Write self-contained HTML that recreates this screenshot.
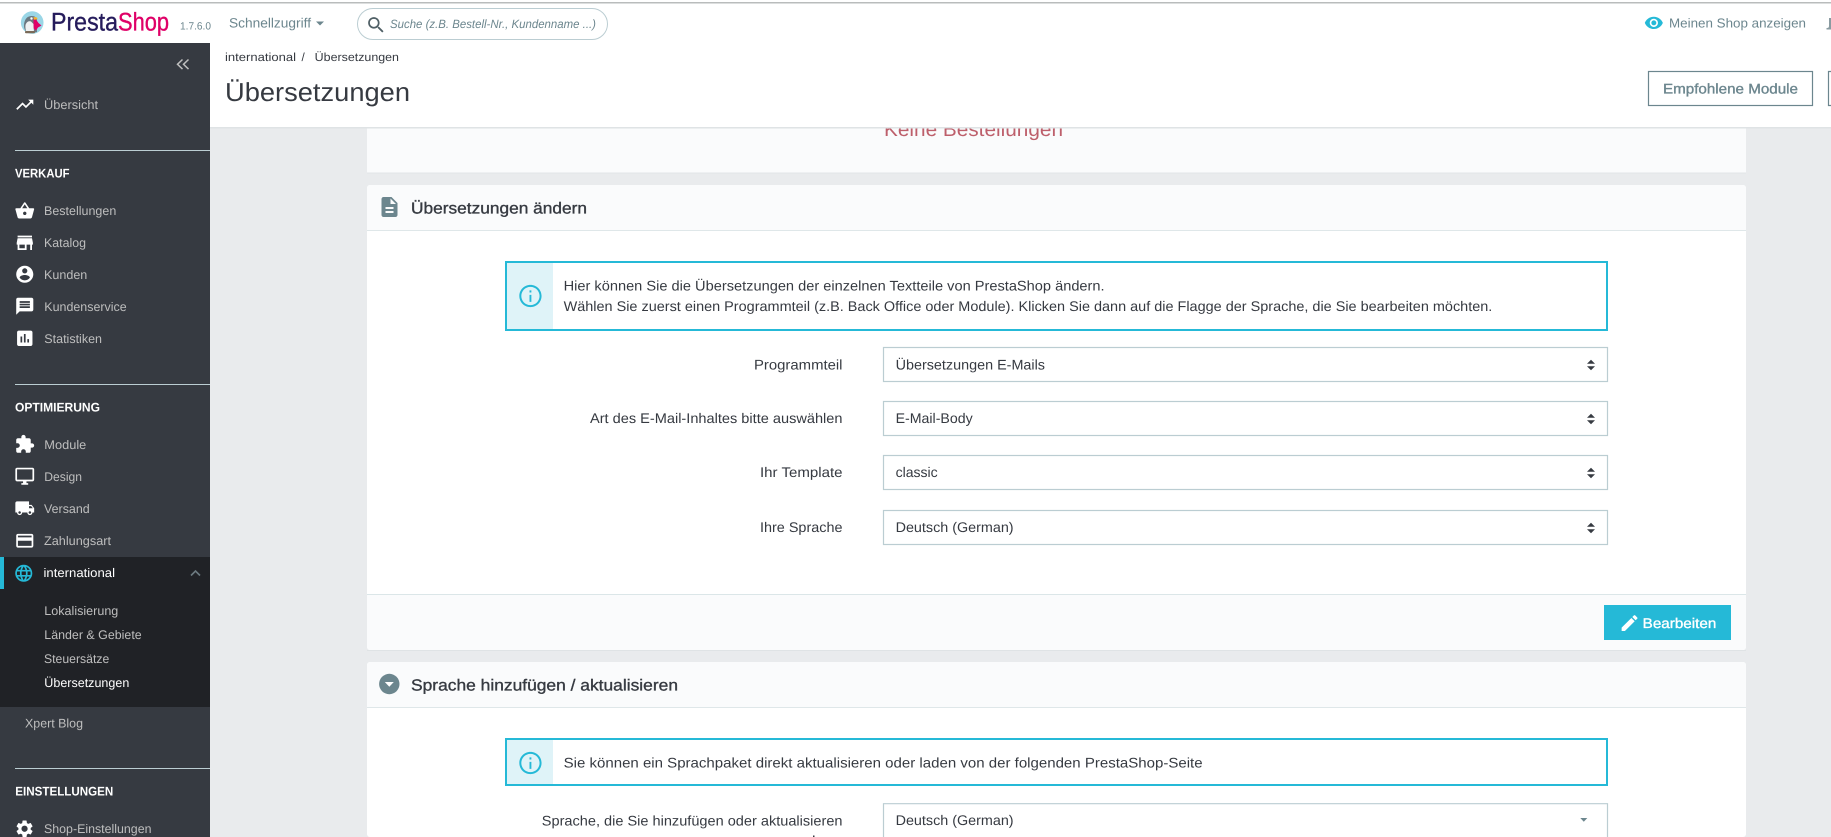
<!DOCTYPE html>
<html lang="de">
<head>
<meta charset="utf-8">
<title>Übersetzungen • PrestaShop</title>
<style>
html,body{margin:0;padding:0;width:1831px;height:837px;overflow:hidden;background:#e9ebed}
svg{display:block}
text{font-family:"Liberation Sans",sans-serif}
.nav{font-size:12.5px;fill:#bebebe}
.sec{font-size:12.5px;font-weight:700;fill:#fff}
.body{font-size:14px;fill:#363a41}
.semi{stroke-width:.35px;paint-order:stroke}
.ic{fill:#fff}
</style>
</head>
<body>
<svg xmlns="http://www.w3.org/2000/svg" width="1831" height="837" viewBox="0 0 1831 837" text-rendering="geometricPrecision">
<defs>
<g id="info"><path fill="#25b9d7" d="M11.200 7.200h1.600v1.800h-1.600zm0 3.800h1.600v6h-1.600zM12 2.500C6.750 2.500 2.500 6.750 2.500 12s4.250 9.500 9.500 9.500 9.500-4.250 9.500-9.500S17.250 2.500 12 2.500zm0 17.300c-4.300 0-7.800-3.500-7.800-7.800S7.700 4.200 12 4.200s7.800 3.500 7.800 7.800-3.500 7.800-7.800 7.800z"/></g>
<g id="ud"><path fill="#363a41" d="M-4 -1 L0 -5 L4 -1 Z M-4 1.500 L0 5.500 L4 1.500 Z"/></g>
</defs>

<!-- page background -->
<rect width="1831" height="837" fill="#e9ebed"/>

<!-- card 1 remnant -->
<rect x="367" y="120" width="1379" height="53" fill="#fafbfc"/>
<rect x="367" y="172.500" width="1379" height="1" fill="#e1e6e8"/>
<text x="884" y="136" font-size="20" fill="#bd5f6b" textLength="179" lengthAdjust="spacingAndGlyphs">Keine Bestellungen</text>

<!-- header -->
<rect x="0" y="0" width="1831" height="127.500" fill="#fff"/>
<rect x="210" y="127" width="1621" height="1.500" fill="#dfe3e5"/>
<rect x="0" y="2" width="1831" height="1.500" fill="#b9bcbc"/>

<!-- logo -->
<circle cx="32.200" cy="22.600" r="11.300" fill="#9ad6e6"/>
<path d="M24 26c0-6 2.500-9.500 7-10c3.500-.4 5.500 1.500 6 3.500l-.5 3l.5 9.500c-3 .8-7 1-10.500 0c-1.500-1.500-2.500-3.500-2.500-6z" fill="#6a7880"/>
<path d="M25.500 25c1-3 3-4.300 5.500-3.500l2.500 2.500l.5 8.500c-2.500 .8-5 .8-7.500 0c-.9-2.500-1.300-5-1-7.500z" fill="#eef1f2"/>
<path d="M33.500 19l2.500 .5l2.500 3.500l3 2.500l-3.500 2l-2 3l-2.300-2l-.2-5z" fill="#df0067"/>
<path d="M33.500 17l3.500 .5l.5 1.700l-3.500 .5z" fill="#f5b42c"/>
<circle cx="31.500" cy="18.500" r="1.200" fill="#fff"/>
<rect x="25" y="31" width="10" height="2.300" rx="1" fill="#7a6a58"/>
<text class="semi" x="51" y="30.500" font-size="25.500" fill="#251b5b" stroke="#251b5b" textLength="67" lengthAdjust="spacingAndGlyphs">Presta</text>
<text class="semi" x="118" y="30.500" font-size="25.500" fill="#df0067" stroke="#df0067" textLength="51" lengthAdjust="spacingAndGlyphs">Shop</text>
<text x="180" y="29.500" font-size="10.500" fill="#6c868e" textLength="31" lengthAdjust="spacingAndGlyphs">1.7.6.0</text>

<text x="229" y="27.500" font-size="13.500" fill="#6c868e" textLength="82" lengthAdjust="spacingAndGlyphs">Schnellzugriff</text>
<path d="M316 21.500h8l-4 4z" fill="#6c868e"/>

<rect x="357.500" y="8.500" width="250" height="31" rx="15.500" fill="#fff" stroke="#bbcdd2" stroke-width="1"/>
<g transform="translate(365.500,14.500) scale(0.88)"><path fill="#4f5f65" d="M15.500 14h-.79l-.28-.27C15.410 12.590 16 11.110 16 9.500 16 5.910 13.090 3 9.500 3S3 5.910 3 9.500 5.910 16 9.500 16c1.610 0 3.090-.59 4.230-1.570l.27.28v.79l5 4.990L20.490 19l-4.990-5zm-6 0C7.010 14 5 11.990 5 9.500S7.010 5 9.500 5 14 7.010 14 9.500 11.990 14 9.500 14z"/></g>
<text x="390" y="28" font-size="12" font-style="italic" fill="#6c868e" textLength="206" lengthAdjust="spacingAndGlyphs">Suche (z.B. Bestell-Nr., Kundenname ...)</text>

<!-- header right -->
<g transform="translate(1644,13) scale(0.82)"><path fill="#25b9d7" d="M12 4.500C7 4.500 2.730 7.610 1 12c1.730 4.390 6 7.500 11 7.500s9.270-3.110 11-7.500c-1.730-4.390-6-7.500-11-7.500zM12 17c-2.760 0-5-2.240-5-5s2.240-5 5-5 5 2.240 5 5-2.240 5-5 5zm0-8c-1.660 0-3 1.340-3 3s1.340 3 3 3 3-1.340 3-3-1.340-3-3-3z"/></g>
<text x="1669" y="27.500" font-size="13" fill="#6c868e" textLength="137" lengthAdjust="spacingAndGlyphs">Meinen Shop anzeigen</text>
<path d="M1829 18v8c0 1.500-1 2-2 2h-.5v1.500h4.500V18z" fill="#8a9ba1"/>

<!-- breadcrumb + title -->
<text x="225" y="61" font-size="11.700" fill="#363a41" textLength="71" lengthAdjust="spacingAndGlyphs">international</text>
<text x="301.500" y="61" font-size="11.700" fill="#363a41">/</text>
<text x="314.700" y="61" font-size="11.700" fill="#363a41" textLength="84.300" lengthAdjust="spacingAndGlyphs">Übersetzungen</text>
<text x="225" y="101" font-size="26" fill="#363a41" textLength="185" lengthAdjust="spacingAndGlyphs">Übersetzungen</text>

<rect x="1648.500" y="71.500" width="164" height="34" fill="#fff" stroke="#6c868e" stroke-width="1.200"/>
<text class="semi" x="1663" y="93.500" font-size="14" fill="#6c868e" stroke="#6c868e" textLength="135" lengthAdjust="spacingAndGlyphs">Empfohlene Module</text>
<path d="M1831 71.500h-2.500v34h2.500" fill="#fff" stroke="#6c868e" stroke-width="1.200"/>

<!-- sidebar -->
<rect x="0" y="43" width="210" height="794" fill="#363a41"/>
<path d="M182.500 59.500l-5 4.800l5 4.800 M188.500 59.500l-5 4.800l5 4.800" fill="none" stroke="#bebebe" stroke-width="1.500"/>

<g transform="translate(14.500,94.500) scale(0.855)"><path class="ic" d="M16 6l2.290 2.290-4.880 4.880-4-4L2 16.590 3.410 18l6-6 4 4 6.300-6.290L22 12V6z"/></g>
<text class="nav" x="44" y="109" textLength="54" lengthAdjust="spacingAndGlyphs">Übersicht</text>

<rect x="15" y="150" width="195" height="1" fill="#bbcdd2"/>
<text class="sec" x="15" y="177.500" textLength="54.500" lengthAdjust="spacingAndGlyphs">VERKAUF</text>

<g transform="translate(14.500,200.500) scale(0.855)"><path class="ic" d="M17.210 9l-4.380-6.560c-.19-.28-.51-.42-.83-.42-.32 0-.64.14-.83.43L6.790 9H2c-.55 0-1 .45-1 1 0 .09.01.18.04.27l2.540 9.270c.23.84 1 1.460 1.920 1.460h13c.92 0 1.690-.62 1.930-1.460l2.540-9.270L23 10c0-.55-.45-1-1-1h-4.790zM9 9l3-4.400L15 9H9zm3 8c-1.100 0-2-.9-2-2s.9-2 2-2 2 .9 2 2-.9 2-2 2z"/></g>
<text class="nav" x="44" y="215" textLength="72.300" lengthAdjust="spacingAndGlyphs">Bestellungen</text>

<g transform="translate(14,232) scale(0.9)"><path class="ic" d="M20 4H4v2h16V4zm1 10v-2l-1-5H4l-1 5v2h1v6h10v-6h4v6h2v-6h1zm-9 4H6v-4h6v4z"/></g>
<text class="nav" x="44" y="247" textLength="42" lengthAdjust="spacingAndGlyphs">Katalog</text>

<g transform="translate(14.500,264) scale(0.855)"><path class="ic" d="M12 2C6.480 2 2 6.480 2 12s4.480 10 10 10 10-4.480 10-10S17.520 2 12 2zm0 3c1.660 0 3 1.340 3 3s-1.340 3-3 3-3-1.340-3-3 1.340-3 3-3zm0 14.200c-2.500 0-4.710-1.280-6-3.220.03-1.990 4-3.080 6-3.080 1.990 0 5.970 1.090 6 3.080-1.290 1.940-3.500 3.220-6 3.220z"/></g>
<text class="nav" x="44" y="279" textLength="43.300" lengthAdjust="spacingAndGlyphs">Kunden</text>

<g transform="translate(14.500,296) scale(0.855)"><path class="ic" d="M20 2H4c-1.100 0-1.990.9-1.990 2L2 22l4-4h14c1.100 0 2-.9 2-2V4c0-1.100-.9-2-2-2zm-2 12H6v-2h12v2zm0-3H6V9h12v2zm0-3H6V6h12v2z"/></g>
<text class="nav" x="44.300" y="311" textLength="82.400" lengthAdjust="spacingAndGlyphs">Kundenservice</text>

<g transform="translate(14.500,328) scale(0.855)"><path class="ic" d="M19 3H5c-1.100 0-2 .9-2 2v14c0 1.100.9 2 2 2h14c1.100 0 2-.9 2-2V5c0-1.100-.9-2-2-2zM9 17H7v-7h2v7zm4 0h-2V7h2v10zm4 0h-2v-4h2v4z"/></g>
<text class="nav" x="44.300" y="343" textLength="57.700" lengthAdjust="spacingAndGlyphs">Statistiken</text>

<rect x="15" y="384" width="195" height="1" fill="#bbcdd2"/>
<text class="sec" x="15" y="411.500" textLength="85" lengthAdjust="spacingAndGlyphs">OPTIMIERUNG</text>

<g transform="translate(14.500,434) scale(0.855)"><path class="ic" d="M20.500 11H19V7c0-1.100-.9-2-2-2h-4V3.500C13 2.120 11.880 1 10.500 1S8 2.120 8 3.500V5H4c-1.100 0-1.990.9-1.990 2v3.800H3.500c1.490 0 2.700 1.210 2.700 2.700s-1.210 2.700-2.700 2.700H2V20c0 1.100.9 2 2 2h3.800v-1.500c0-1.490 1.210-2.700 2.700-2.700 1.490 0 2.700 1.210 2.700 2.700V22H17c1.100 0 2-.9 2-2v-4h1.500c1.380 0 2.500-1.120 2.500-2.500S21.880 11 20.500 11z"/></g>
<text class="nav" x="44.300" y="449" textLength="42" lengthAdjust="spacingAndGlyphs">Module</text>

<g transform="translate(14.500,466) scale(0.855)"><path class="ic" d="M21 2H3c-1.100 0-2 .9-2 2v12c0 1.100.9 2 2 2h7v2H8v2h8v-2h-2v-2h7c1.100 0 2-.9 2-2V4c0-1.100-.9-2-2-2zm0 14H3V4h18v12z"/></g>
<text class="nav" x="44.300" y="481" textLength="37.700" lengthAdjust="spacingAndGlyphs">Design</text>

<g transform="translate(14.500,498) scale(0.855)"><path class="ic" d="M20 8h-3V4H3c-1.100 0-2 .9-2 2v11h2c0 1.660 1.340 3 3 3s3-1.340 3-3h6c0 1.660 1.340 3 3 3s3-1.340 3-3h2v-5l-3-4zM6 18.500c-.83 0-1.500-.67-1.500-1.500s.67-1.500 1.500-1.500 1.500.67 1.500 1.500-.67 1.500-1.500 1.500zm13.500-9l1.960 2.500H17V9.500h2.500zm-1.500 9c-.83 0-1.500-.67-1.500-1.500s.67-1.500 1.500-1.500 1.500.67 1.500 1.500-.67 1.500-1.500 1.500z"/></g>
<text class="nav" x="44" y="513" textLength="45.700" lengthAdjust="spacingAndGlyphs">Versand</text>

<g transform="translate(14.500,530.500) scale(0.855)"><path class="ic" d="M20 4H4c-1.110 0-1.990.89-1.990 2L2 18c0 1.110.89 2 2 2h16c1.110 0 2-.89 2-2V6c0-1.110-.89-2-2-2zm0 14H4v-6h16v6zm0-10H4V6h16v2z"/></g>
<text class="nav" x="44" y="545" textLength="67" lengthAdjust="spacingAndGlyphs">Zahlungsart</text>

<!-- active group -->
<rect x="0" y="557" width="210" height="150" fill="#202226"/>
<rect x="0" y="557" width="4" height="32" fill="#25b9d7"/>
<g transform="translate(13.500,563) scale(0.855)"><path fill="#25b9d7" d="M11.990 2C6.470 2 2 6.480 2 12s4.470 10 9.990 10C17.520 22 22 17.520 22 12S17.520 2 11.990 2zm6.930 6h-2.950c-.32-1.250-.78-2.450-1.380-3.560 1.840.63 3.370 1.910 4.330 3.560zM12 4.040c.83 1.200 1.480 2.530 1.910 3.960h-3.820c.43-1.430 1.080-2.760 1.910-3.960zM4.260 14C4.100 13.360 4 12.690 4 12s.1-1.360.26-2h3.380c-.08.66-.14 1.320-.14 2 0 .68.06 1.340.14 2H4.260zm.82 2h2.950c.32 1.250.78 2.450 1.380 3.560-1.840-.63-3.370-1.900-4.330-3.560zm2.950-8H5.080c.96-1.660 2.490-2.930 4.330-3.560C8.810 5.550 8.350 6.750 8.030 8zM12 19.960c-.83-1.200-1.480-2.530-1.910-3.960h3.820c-.43 1.430-1.080 2.760-1.910 3.960zM14.340 14H9.660c-.09-.66-.16-1.320-.16-2 0-.68.07-1.350.16-2h4.680c.09.650.16 1.320.16 2 0 .68-.07 1.340-.16 2zm.25 5.560c.6-1.110 1.060-2.310 1.380-3.560h2.950c-.96 1.650-2.490 2.930-4.330 3.560zM16.360 14c.08-.66.14-1.320.14-2 0-.68-.06-1.340-.14-2h3.380c.16.640.26 1.310.26 2s-.1 1.360-.26 2h-3.380z"/></g>
<text x="43.500" y="577" font-size="12.500" fill="#fff" textLength="71.500" lengthAdjust="spacingAndGlyphs">international</text>
<path d="M191 575.500l4.500-4.500l4.500 4.500" fill="none" stroke="#6c7a80" stroke-width="1.600"/>
<text class="nav" x="44.300" y="615" textLength="74" lengthAdjust="spacingAndGlyphs">Lokalisierung</text>
<text class="nav" x="44.300" y="639" textLength="97.400" lengthAdjust="spacingAndGlyphs">Länder &amp; Gebiete</text>
<text class="nav" x="44" y="663" textLength="65.300" lengthAdjust="spacingAndGlyphs">Steuersätze</text>
<text x="44.300" y="687" font-size="12.500" fill="#fff" textLength="85" lengthAdjust="spacingAndGlyphs">Übersetzungen</text>

<text class="nav" x="25" y="727.500" textLength="58" lengthAdjust="spacingAndGlyphs">Xpert Blog</text>

<rect x="15" y="768" width="195" height="1" fill="#bbcdd2"/>
<text class="sec" x="15.300" y="795.500" textLength="98" lengthAdjust="spacingAndGlyphs">EINSTELLUNGEN</text>

<g transform="translate(14.300,818.500) scale(0.855)"><path class="ic" d="M19.140 12.940c.04-.3.06-.61.06-.94 0-.32-.02-.64-.07-.94l2.030-1.580c.18-.14.23-.41.12-.61l-1.920-3.320c-.12-.22-.37-.29-.59-.22l-2.390.96c-.5-.38-1.030-.7-1.620-.94l-.36-2.540c-.04-.24-.24-.41-.48-.41h-3.840c-.24 0-.43.17-.47.41l-.36 2.540c-.59.24-1.130.57-1.620.94l-2.390-.96c-.22-.08-.47 0-.59.22L2.740 8.870c-.12.21-.08.47.12.61l2.030 1.580c-.05.3-.09.63-.09.94s.02.64.07.94l-2.030 1.580c-.18.14-.23.41-.12.61l1.920 3.320c.12.22.37.29.59.22l2.390-.96c.5.38 1.030.7 1.620.94l.36 2.540c.05.24.24.41.48.41h3.840c.24 0 .44-.17.47-.41l.36-2.540c.59-.24 1.130-.56 1.620-.94l2.390.96c.22.08.47 0 .59-.22l1.920-3.320c.12-.22.07-.47-.12-.61l-2.010-1.580zM12 15.600c-1.980 0-3.600-1.620-3.600-3.600s1.620-3.600 3.600-3.600 3.600 1.620 3.600 3.600-1.620 3.600-3.600 3.600z"/></g>
<text class="nav" x="44" y="833" textLength="107.500" lengthAdjust="spacingAndGlyphs">Shop-Einstellungen</text>

<!-- card 2 -->
<rect x="367" y="185" width="1379" height="465" rx="3" fill="#fff"/>
<rect x="367" y="650" width="1379" height="1" fill="#dfe3e5"/>
<path d="M367 230v-42a3 3 0 0 1 3-3h1373a3 3 0 0 1 3 3v42z" fill="#fafbfc"/>
<rect x="367" y="230" width="1379" height="1" fill="#dfe7e9"/>
<g transform="translate(377.500,195)"><path fill="#6c868e" d="M14 2H6c-1.100 0-1.990.9-1.990 2L4 20c0 1.100.89 2 1.990 2H18c1.100 0 2-.9 2-2V8l-6-6zm2 16H8v-2h8v2zm0-4H8v-2h8v2zm-3-5V3.500L18.500 9H13z"/></g>
<text class="semi" x="411" y="213.500" font-size="16" fill="#363a41" stroke="#363a41" textLength="176" lengthAdjust="spacingAndGlyphs">Übersetzungen ändern</text>

<!-- alert 1 -->
<rect x="506" y="262" width="1101" height="68" fill="#fff" stroke="#25b9d7" stroke-width="2"/>
<rect x="507" y="263" width="46" height="66" fill="#dff3f8"/>
<use href="#info" transform="translate(516.400,282) scale(1.170)"/>
<text class="body" x="563.600" y="290.700" textLength="541" lengthAdjust="spacingAndGlyphs">Hier können Sie die Übersetzungen der einzelnen Textteile von PrestaShop ändern.</text>
<text class="body" x="563.600" y="311.200" textLength="928.700" lengthAdjust="spacingAndGlyphs">Wählen Sie zuerst einen Programmteil (z.B. Back Office oder Module). Klicken Sie dann auf die Flagge der Sprache, die Sie bearbeiten möchten.</text>

<!-- form rows -->
<text class="body" x="754" y="369.500" textLength="88.500" lengthAdjust="spacingAndGlyphs">Programmteil</text>
<rect x="883.500" y="347.500" width="724" height="34" fill="#fff" stroke="#bbcdd2" stroke-width="1.200"/>
<text class="body" x="895.600" y="369.500" textLength="149.400" lengthAdjust="spacingAndGlyphs">Übersetzungen E-Mails</text>
<use href="#ud" transform="translate(1591,364.700)"/>

<text class="body" x="590" y="423" textLength="252.500" lengthAdjust="spacingAndGlyphs">Art des E-Mail-Inhaltes bitte auswählen</text>
<rect x="883.500" y="401.500" width="724" height="34" fill="#fff" stroke="#bbcdd2" stroke-width="1.200"/>
<text class="body" x="895.600" y="423" textLength="77.100" lengthAdjust="spacingAndGlyphs">E-Mail-Body</text>
<use href="#ud" transform="translate(1591,418.700)"/>

<text class="body" x="760" y="477" textLength="82.500" lengthAdjust="spacingAndGlyphs">Ihr Template</text>
<rect x="883.500" y="455.500" width="724" height="34" fill="#fff" stroke="#bbcdd2" stroke-width="1.200"/>
<text class="body" x="895.600" y="477" textLength="42.100" lengthAdjust="spacingAndGlyphs">classic</text>
<use href="#ud" transform="translate(1591,472.700)"/>

<text class="body" x="760" y="532" textLength="82.500" lengthAdjust="spacingAndGlyphs">Ihre Sprache</text>
<rect x="883.500" y="510.500" width="724" height="34" fill="#fff" stroke="#bbcdd2" stroke-width="1.200"/>
<text class="body" x="895.600" y="532" textLength="118" lengthAdjust="spacingAndGlyphs">Deutsch (German)</text>
<use href="#ud" transform="translate(1591,527.700)"/>

<!-- card footer -->
<path d="M367 594h1379v53a3 3 0 0 1-3 3H370a3 3 0 0 1-3-3z" fill="#fafbfc"/>
<rect x="367" y="594" width="1379" height="1" fill="#dbe6e8"/>
<rect x="1604" y="605" width="127" height="35" fill="#25b9d7"/>
<g transform="translate(1619,612.500) scale(0.88)"><path fill="#fff" d="M3 17.250V21h3.750L17.810 9.940l-3.750-3.750L3 17.250zM20.710 7.040c.39-.39.39-1.020 0-1.410l-2.340-2.340c-.39-.39-1.020-.39-1.410 0l-1.830 1.830 3.750 3.750 1.830-1.830z"/></g>
<text class="semi" x="1642.700" y="628" font-size="14" fill="#fff" stroke="#fff" textLength="73.600" lengthAdjust="spacingAndGlyphs">Bearbeiten</text>

<!-- card 3 -->
<rect x="367" y="662" width="1379" height="175" rx="3" fill="#fff"/>
<path d="M367 707v-42a3 3 0 0 1 3-3h1373a3 3 0 0 1 3 3v42z" fill="#fafbfc"/>
<rect x="367" y="707" width="1379" height="1" fill="#dfe7e9"/>
<circle cx="389.300" cy="684" r="10.200" fill="#6c868e"/>
<path d="M384.800 682h9l-4.500 4.800z" fill="#fff"/>
<text class="semi" x="411" y="690.500" font-size="16" fill="#363a41" stroke="#363a41" textLength="267" lengthAdjust="spacingAndGlyphs">Sprache hinzufügen / aktualisieren</text>

<rect x="506" y="739" width="1101" height="46" fill="#fff" stroke="#25b9d7" stroke-width="2"/>
<rect x="507" y="740" width="46" height="44" fill="#dff3f8"/>
<use href="#info" transform="translate(516.400,749) scale(1.170)"/>
<text class="body" x="563.600" y="767.500" textLength="639" lengthAdjust="spacingAndGlyphs">Sie können ein Sprachpaket direkt aktualisieren oder laden von der folgenden PrestaShop-Seite</text>

<text class="body" x="541.800" y="825.500" textLength="300.700" lengthAdjust="spacingAndGlyphs">Sprache, die Sie hinzufügen oder aktualisieren</text>
<rect x="813" y="835.500" width="1.500" height="1.500" fill="#363a41"/>
<path d="M883.500 837V803.700H1607.500V837" fill="#fff" stroke="#bbcdd2" stroke-width="1.200"/>
<text class="body" x="895.600" y="825" textLength="118" lengthAdjust="spacingAndGlyphs">Deutsch (German)</text>
<path d="M1580.300 818h7l-3.500 3.800z" fill="#6c868e"/>
</svg>
</body>
</html>
